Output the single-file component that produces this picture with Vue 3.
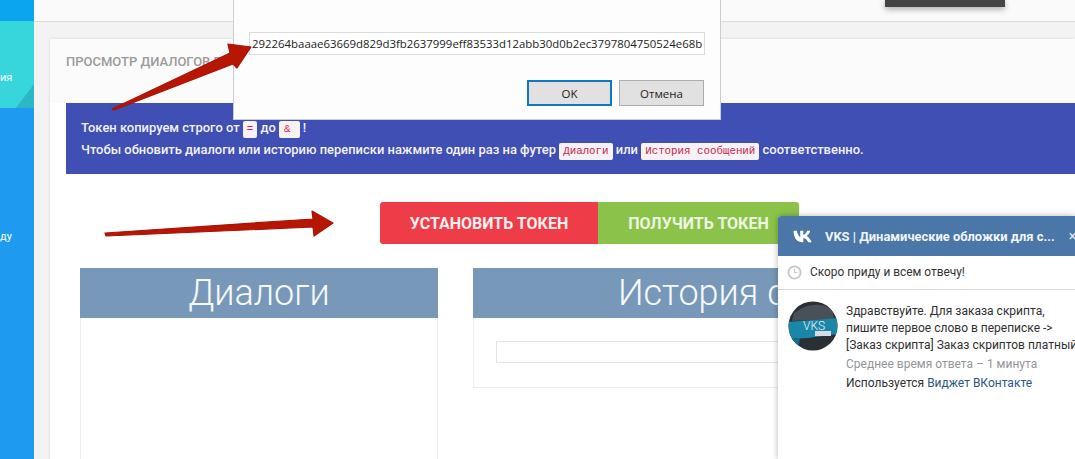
<template>
  <div class="page">
    <!-- боковая панель, видна только правая часть -->
    <aside class="sidebar">
      <div class="side-top"></div>
      <div class="side-teal">
        <span class="side-label">ия</span>
        <i class="teal-corner"></i>
      </div>
      <div class="side-rest">
        <span class="side-label">ду</span>
      </div>
    </aside>

    <main class="main">
      <header class="topbar">
        <div class="dark-tab"></div>
      </header>

      <section class="card">
        <h2 class="card-title">ПРОСМОТР ДИАЛОГОВ ВО</h2>

        <div class="notice">
          <p>Токен копируем строго от <code class="tiny">=</code> до <code class="tiny amp">&amp;</code> !</p>
          <p>Чтобы обновить диалоги или историю переписки нажмите один раз на футер <code>Диалоги</code> или <code>История сообщений</code> соответственно.</p>
        </div>

        <div class="actions">
          <button class="btn btn-red">УСТАНОВИТЬ ТОКЕН</button>
          <button class="btn btn-green">ПОЛУЧИТЬ ТОКЕН</button>
        </div>

        <div class="panels">
          <div class="panel panel-left">
            <div class="panel-head">Диалоги</div>
            <div class="panel-body"></div>
          </div>
          <div class="panel panel-right">
            <div class="panel-head">История сообщений</div>
            <div class="panel-body short">
              <div class="fake-input"></div>
            </div>
          </div>
        </div>
      </section>
    </main>

    <!-- окно prompt поверх страницы -->
    <div class="dialog">
      <div class="token">292264baaae63669d829d3fb2637999eff83533d12abb30d0b2ec3797804750524e68b</div>
      <div class="dialog-btns">
        <button class="win-btn win-ok">OK</button>
        <button class="win-btn">Отмена</button>
      </div>
    </div>

    <!-- стрелки со скриншота -->
    <svg class="arrows" viewBox="0 0 1075 459" width="1075" height="459">
      <path d="M112 109 L230 53 L228 44 L251 47 L237 68 L233 64 L114 110 Z" fill="#b81604" stroke="#a81304" stroke-width="1.2" stroke-linejoin="round" />
      <path d="M105 233 L313 219 L312 211 L333 223 L314 236 L313 227 L106 236 Z" fill="#b81604" stroke="#a81304" stroke-width="1.2" stroke-linejoin="round" />
    </svg>

    <!-- виджет сообщений -->
    <div class="widget">
      <div class="widget-head">
        <svg class="vk-logo" viewBox="0 0 22 13" width="21" height="13">
          <path d="M0.5 0.5 H4 C4.6 4 6 6.2 7.6 7 V0.5 H10.8 V4.8 C12.4 4.5 14 2.6 14.8 0.5 H18 C17.5 3 15.8 5 14.2 6 C16 6.8 18.2 9 19.5 12.5 H16 C15 10 13 8.2 10.8 8 V12.5 H9.8 C4.5 12.5 1 9 0.5 0.5 Z" fill="#fff" />
        </svg>
        <span class="widget-title">VKS | Динамические обложки для с...</span>
        <span class="widget-close">×</span>
      </div>
      <div class="widget-status">
        <svg viewBox="0 0 16 16" width="15" height="15">
          <circle cx="8" cy="8" r="6.5" fill="none" stroke="#c4c8cc" stroke-width="2" />
          <path d="M8 4 V8 H11" fill="none" stroke="#c4c8cc" stroke-width="1.3" />
        </svg>
        <span>Скоро приду и всем отвечу!</span>
      </div>
      <div class="widget-msg">
        <svg class="avatar" viewBox="0 0 50 50" width="50" height="50">
          <defs>
            <clipPath id="ava"><circle cx="25" cy="25" r="24.5" /></clipPath>
          </defs>
          <g clip-path="url(#ava)">
            <rect width="50" height="50" fill="#2a2f36" />
            <path d="M6 12 Q25 -2 44 8 L46 18 L4 20 Z" fill="#4a5058" />
            <path d="M0 21 L50 17 V33 L20 37 L0 38 Z" fill="#1a86a8" />
            <path d="M0 38 L12 37 L10 50 H0 Z" fill="#176d88" />
            <rect x="27" y="30" width="16" height="5" fill="#d5dde2" />
            <text x="15" y="29" class="ava-text">VKS</text>
          </g>
        </svg>
        <div class="msg-text">
          <p>Здравствуйте. Для заказа скрипта,</p>
          <p>пишите первое слово в переписке -&gt;</p>
          <p class="nowrap">[Заказ скрипта] Заказ скриптов платный</p>
          <p class="muted">Среднее время ответа – 1 минута</p>
          <p class="used">Используется <span class="link">Виджет ВКонтакте</span></p>
        </div>
      </div>
    </div>
  </div>
</template>

<script setup>
</script>

<style>
html, body { margin: 0; overflow: hidden; }
</style>

<style scoped>
.page { position: relative; display: flex; width: 1075px; height: 459px; overflow: hidden; background: #f3f3f3; font-family: Roboto, "Liberation Sans", sans-serif; }
.sidebar { width: 34px; flex-shrink: 0; display: flex; flex-direction: column; background: #1e9bf0; color: #fff; font-size: 11px; }
.side-top { height: 21px; background: #0aa5ee; }
.side-teal { position: relative; height: 87px; background: #36d6dc; overflow: hidden; }
.teal-corner { position: absolute; right: 0; bottom: 0; border-style: solid; border-width: 0 0 24px 18px; border-color: transparent transparent #2cb6c6 transparent; }
.side-label { display: block; line-height: 14px; }
.side-teal .side-label { margin-top: 50px; }
.side-rest { flex: 1; padding-top: 122px; }

.main { flex: 1; min-width: 0; display: flex; flex-direction: column; padding-left: 0; }
.topbar { height: 21px; flex-shrink: 0; background: #fafafa; border-bottom: 1px solid #dcdcdc; display: flex; justify-content: flex-end; padding-right: 70px; box-sizing: content-box; }
.dark-tab { width: 120px; height: 7px; background: #444; box-shadow: 0 2px 6px rgba(0,0,0,.35); }

.card { flex: 1; margin: 17px 0 0 16px; background: #fff; box-shadow: 0 0 3px rgba(0,0,0,.12); min-width: 0; }
.card-title { margin: 0; height: 64px; padding: 15px 0 0 16px; box-sizing: border-box; background: #fbfbfb; font-size: 13px; line-height: 16px; font-weight: 500; color: #9a9a9a; white-space: nowrap; }
.notice { margin-left: 16px; height: 71px; box-sizing: border-box; padding: 14px 0 0 15px; background: #3f4fb3; color: #f2f2f8; font-size: 12.95px; font-weight: 500; white-space: nowrap; }
.notice p { margin: 0; height: 22px; line-height: 22px; }
.notice code { display: inline-block; height: 17px; line-height: 17px; padding: 0 4px; background: #f9f2f4; border-radius: 2px; color: #c7254e; font-family: "Liberation Mono", monospace; font-size: 10.8px; font-weight: 400; }
.notice code.tiny { padding: 0 4px; }
.notice code.amp { padding: 0 9px 0 5px; }

.actions { display: flex; margin: 28px 0 0 330px; }
.btn { height: 42px; border: 0; padding: 0; color: #fbeeee; font-family: Roboto, "Liberation Sans", sans-serif; font-size: 16px; font-weight: 700; }
.btn-red { width: 218px; background: #ee3d49; border-radius: 3px 0 0 3px; }
.btn-green { width: 201px; background: #8bc34a; color: #eef6e2; border-radius: 0 3px 3px 0; }

.panels { display: flex; margin: 24px 0 0 30px; gap: 35px; align-items: flex-start; white-space: nowrap; }
.panel { flex-shrink: 0; border: 1px solid #eeeeee; border-top: 0; box-sizing: border-box; }
.panel-left { width: 358px; }
.panel-right { width: 626px; }
.panel-head { height: 50px; margin: 0 -1px; background: #7798b8; color: #f7f9fb; font-size: 36px; font-weight: 300; line-height: 50px; text-align: center; }
.panel-left .panel-body { height: 150px; }
.panel-body.short { height: 69px; padding: 23px 0 0 22px; box-sizing: border-box; }
.fake-input { width: 400px; height: 22px; border: 1px solid #e4e4e4; box-sizing: border-box; }

.dialog { position: absolute; left: 233px; top: -2px; width: 488px; height: 122px; box-sizing: border-box; padding: 33px 15px 0; background: #fdfdfd; border: 1px solid #c9ced6; }
.token { height: 23px; box-sizing: border-box; border: 1px solid #dcdcdc; padding-left: 2px; background: #fff; color: #1c1c1c; font-family: "Open Sans", "Liberation Sans", sans-serif; font-size: 11.4px; line-height: 21px; white-space: nowrap; overflow: hidden; }
.dialog-btns { display: flex; justify-content: flex-end; gap: 7px; margin-top: 25px; padding-right: 1px; }
.win-btn { width: 85px; height: 26px; padding: 0; box-sizing: border-box; border: 1px solid #adadad; background: #e1e1e1; color: #222; font-family: "Open Sans", "Liberation Sans", sans-serif; font-size: 11.5px; }
.win-ok { border: 2px solid #0f78c0; }

.arrows { position: absolute; left: 0; top: 0; pointer-events: none; }

.widget { position: absolute; left: 778px; top: 216px; width: 297px; height: 243px; background: #fff; box-shadow: 0 0 6px rgba(0,0,0,.3); border-radius: 3px 0 0 0; font-family: Roboto, "Liberation Sans", sans-serif; }
.widget-head { height: 40px; display: flex; align-items: center; padding-left: 15px; background: #4a76a8; color: #fff; border-radius: 3px 0 0 0; white-space: nowrap; overflow: hidden; }
.vk-logo { flex-shrink: 0; }
.widget-title { margin-left: 11px; font-size: 12.9px; font-weight: 700; color: #f1f5f9; }
.widget-close { margin-left: 14px; font-size: 14px; color: #dfe7f0; }
.widget-status { height: 34px; display: flex; align-items: center; gap: 8px; padding-left: 9px; padding-bottom: 1px; box-sizing: border-box; border-bottom: 1px solid #d7d8db; color: #333; font-size: 11.9px; }
.widget-msg { display: flex; padding-top: 11px; padding-left: 10px; gap: 8px; white-space: nowrap; }
.avatar { flex-shrink: 0; margin-top: 0; }
.ava-text { font-family: Roboto, sans-serif; font-size: 12px; font-weight: 300; fill: #e8f4f8; }
.msg-text { font-size: 12px; line-height: 17px; color: #2f2f2f; padding-top: 2px; }
.msg-text p { margin: 0; }
.msg-text .muted { color: #939699; line-height: 19px; margin-top: 1px; }
.msg-text .used { line-height: 19px; }
.link { color: #2a5885; }
</style>
